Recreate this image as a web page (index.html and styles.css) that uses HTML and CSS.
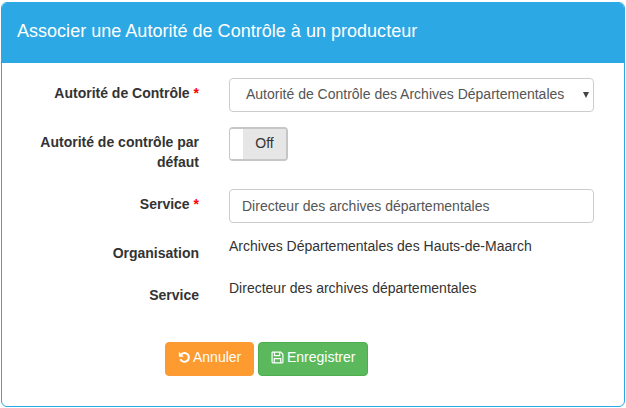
FILE: index.html
```html
<!DOCTYPE html>
<html lang="fr">
<head>
<meta charset="utf-8">
<title>Associer une Autorité de Contrôle à un producteur</title>
<link rel="stylesheet" href="styles.css">
</head>
<body>
<div class="panel">
  <div class="panel-heading">Associer une Autorité de Contrôle à un producteur</div>
  <form class="panel-body">
    <div class="row row-select">
      <label class="label">Autorité de Contrôle <span class="req">*</span></label>
      <div class="field">
        <div class="select"><span>Autorité de Contrôle des Archives Départementales</span><i class="caret"></i></div>
      </div>
    </div>
    <div class="row row-switch">
      <label class="label">Autorité de contrôle par défaut</label>
      <div class="field">
        <div class="switch"><span class="knob"></span><span class="off">Off</span></div>
      </div>
    </div>
    <div class="row row-input">
      <label class="label">Service <span class="req">*</span></label>
      <div class="field">
        <input class="input" type="text" value="Directeur des archives départementales">
      </div>
    </div>
    <div class="row row-static">
      <label class="label">Organisation</label>
      <div class="field static">Archives Départementales des Hauts-de-Maarch</div>
    </div>
    <div class="row row-static">
      <label class="label">Service</label>
      <div class="field static">Directeur des archives départementales</div>
    </div>
    <div class="actions">
      <button type="button" class="btn btn-orange">
        <svg class="icon icon-undo" viewBox="0 0 12 12" aria-hidden="true"><path d="M3.1 2.9A4.1 4.1 0 1 1 2.2 7.6" fill="none" stroke="#fff" stroke-width="1.9"/><path d="M0.8 0.8V5.4H5.4Z" fill="#fff"/></svg>Annuler
      </button>
      <button type="button" class="btn btn-green">
        <svg class="icon" viewBox="0 0 12 12" aria-hidden="true"><path d="M1.5 1H9L11 3V10.2Q11 11 10.2 11H1.8Q1 11 1 10.2V1.5Q1 1 1.5 1Z" fill="none" stroke="#fff" stroke-width="1.1"/><path d="M3.2 1.2V4.2H8V1.2M3 11V7H9V11" fill="none" stroke="#fff" stroke-width="1.1"/></svg>Enregistrer
      </button>
    </div>
  </form>
</div>
</body>
</html>
```
FILE: styles.css
```css
* { box-sizing: border-box; }
html, body { margin: 0; padding: 0; background: #fff; }
body {
  font-family: "Liberation Sans", Arial, sans-serif;
  font-size: 14px;
  line-height: 20px;
  color: #333;
  padding: 2px 0 0 1px;
}
.panel {
  width: 624px;
  height: 405px;
  border: 1px solid #2ca8e4;
  border-radius: 6px;
  overflow: hidden;
}
.panel-heading {
  height: 60px;
  background: #2ca8e4;
  color: #fff;
  font-size: 18px;
  line-height: 20px;
  padding: 18px 15px 0;
  letter-spacing: 0.02px;
}
.panel-body { padding-top: 15px; }
.row {
  display: grid;
  grid-template-columns: 197px 365px;
  column-gap: 30px;
}
.label {
  font-weight: 700;
  text-align: right;
  padding-top: 5px;
}
.req { color: #f00; }
.row-select { height: 49px; }
.row-switch { height: 62px; }
.row-input { height: 47px; }
.row-static { height: 42px; }
.row-static .label { padding-top: 7px; }
.row-switch .label { padding-top: 5px; }
.select {
  height: 34px;
  border: 1px solid #ccc;
  border-radius: 4px;
  color: #555;
  padding: 5px 0 0 16px;
  display: flex;
  justify-content: space-between;
}
.caret {
  width: 0;
  height: 0;
  margin: 8px 4px 0 0;
  border-left: 3.5px solid transparent;
  border-right: 3.5px solid transparent;
  border-top: 6px solid #444;
}
.switch {
  width: 59px;
  height: 34px;
  border: 2px solid #c6c6c6;
  border-left-width: 1px;
  border-radius: 4px;
  display: flex;
  overflow: hidden;
}
.knob { width: 13px; background: #fff; }
.off {
  flex: 1;
  background: #e6e6e6;
  text-align: center;
  padding: 4px 0 0;
}
.input {
  display: block;
  width: 100%;
  height: 34px;
  border: 1px solid #ccc;
  border-radius: 4px;
  padding: 6px 12px;
  font: 14px/20px "Liberation Sans", Arial, sans-serif;
  color: #555;
  background: #fff;
}
.actions {
  display: flex;
  gap: 4px;
  padding: 22px 0 0 163px;
}
.btn {
  height: 34px;
  border: 1px solid;
  border-radius: 4px;
  color: #fff;
  font: 14px/20px "Liberation Sans", Arial, sans-serif;
  padding: 0 0 4px 12px;
  display: flex;
  align-items: center;
}
.btn-orange { width: 89px; background: #fd9a30; border-color: #f99a35; }
.btn-green { width: 110px; background: #5cb85c; border-color: #4cae4c; }
.icon { width: 13px; height: 13px; margin-right: 3px; flex: none; }
.icon-undo { margin-right: 2px; }
```
